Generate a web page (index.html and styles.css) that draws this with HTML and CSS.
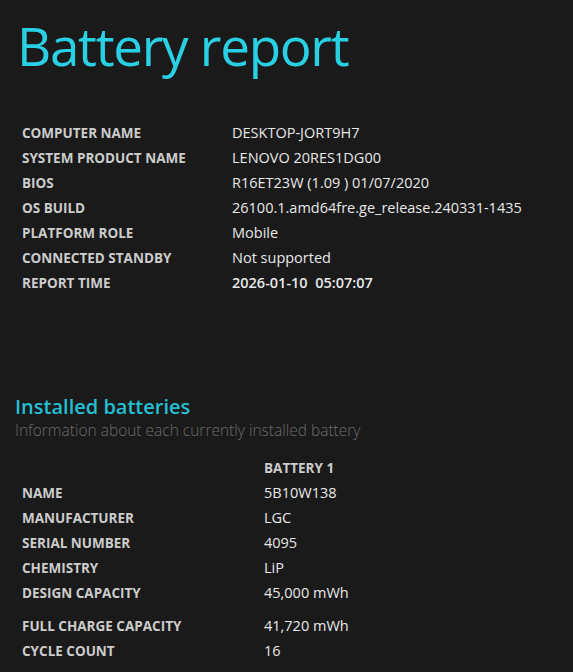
FILE: index.html
```html
<!DOCTYPE html>
<html>
<head>
<meta charset="utf-8">
<link rel="stylesheet" href="styles.css">
</head>
<body>
<h1 class="title">Battery report</h1>
<table class="info">
  <tr><td class="label">COMPUTER NAME</td><td class="value">DESKTOP-JORT9H7</td></tr>
  <tr><td class="label">SYSTEM PRODUCT NAME</td><td class="value">LENOVO 20RES1DG00</td></tr>
  <tr><td class="label">BIOS</td><td class="value">R16ET23W (1.09 ) 01/07/2020</td></tr>
  <tr><td class="label">OS BUILD</td><td class="value">26100.1.amd64fre.ge_release.240331-1435</td></tr>
  <tr><td class="label">PLATFORM ROLE</td><td class="value">Mobile</td></tr>
  <tr><td class="label">CONNECTED STANDBY</td><td class="value">Not supported</td></tr>
  <tr><td class="label">REPORT TIME</td><td class="value strong">2026-01-10&nbsp; 05:07:07</td></tr>
</table>
<h2 class="section">Installed batteries</h2>
<div class="subtitle">Information about each currently installed battery</div>
<table class="batteries">
  <tr><td class="label"></td><td class="colhead">BATTERY 1</td></tr>
  <tr><td class="label">NAME</td><td class="value">5B10W138</td></tr>
  <tr><td class="label">MANUFACTURER</td><td class="value">LGC</td></tr>
  <tr><td class="label">SERIAL NUMBER</td><td class="value">4095</td></tr>
  <tr><td class="label">CHEMISTRY</td><td class="value">LiP</td></tr>
  <tr><td class="label">DESIGN CAPACITY</td><td class="value">45,000 mWh</td></tr>
  <tr class="spaced"><td class="label">FULL CHARGE CAPACITY</td><td class="value">41,720 mWh</td></tr>
  <tr><td class="label">CYCLE COUNT</td><td class="value">16</td></tr>
</table>
</body>
</html>
```
FILE: styles.css
```css
html, body {
  margin: 0;
  padding: 0;
  background: #1a1a1a;
}
body {
  font-family: "Open Sans", "Noto Sans", sans-serif;
  color: #e6e6e6;
  padding: 0 0 0 15px;
}
.title {
  font-weight: 400;
  font-size: 53px;
  line-height: 60px;
  color: #29d0e4;
  margin: 16px 0 0 2px;
  letter-spacing: -1.3px;
}
table {
  border-collapse: collapse;
}
td {
  padding: 0;
  height: 25px;
  vertical-align: middle;
  white-space: nowrap;
}
.info {
  margin: 44px 0 0 7px;
}
.info .label {
  width: 210px;
}
.label {
  font-weight: 700;
  font-size: 13.5px;
  color: #cccccc;
}
.value {
  font-size: 14.5px;
  color: #e8e8e8;
}
.value.strong {
  font-weight: 600;
}
.section {
  font-size: 20px;
  font-weight: 600;
  color: #25bfd2;
  margin: 99px 0 0 0;
  line-height: 26px;
}
.subtitle {
  font-size: 15.5px;
  font-weight: 300;
  color: #6b6b6b;
  line-height: 20px;
}
.batteries {
  margin: 15px 0 0 7px;
}
.batteries .label {
  width: 242px;
}
.colhead {
  font-weight: 700;
  font-size: 13.5px;
  color: #cccccc;
}
.spaced td {
  height: 33px;
  padding-top: 8px;
  box-sizing: border-box;
}
```
